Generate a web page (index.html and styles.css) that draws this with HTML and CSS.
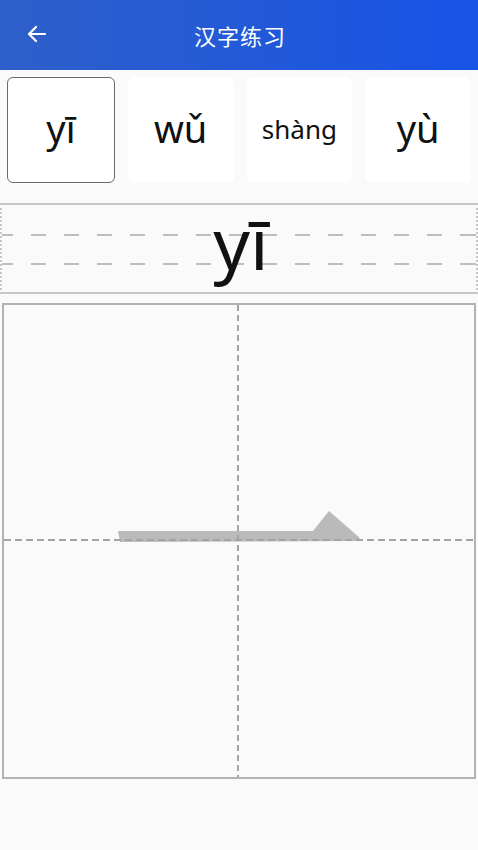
FILE: index.html
```html
<!DOCTYPE html>
<html lang="zh">
<head>
<meta charset="utf-8">
<title>汉字练习</title>
<link rel="stylesheet" href="styles.css">
</head>
<body>
<header class="topbar">
  <button class="back" aria-label="返回">
    <svg width="24" height="24" viewBox="0 0 24 24" fill="none" stroke="#fff" stroke-width="2.2" stroke-linecap="round" stroke-linejoin="round"><path d="M20 12H4.5"/><path d="M11 5l-7 7 7 7"/></svg>
  </button>
  <h1 class="title">汉字练习</h1>
</header>

<section class="cards">
  <div class="card active"><span class="py">yī</span></div>
  <div class="card"><span class="py">wǔ</span></div>
  <div class="card"><span class="py small">shàng</span></div>
  <div class="card"><span class="py">yù</span></div>
</section>

<section class="lines">
  <div class="band b1"></div>
  <div class="dash"></div>
  <div class="band b2"></div>
  <div class="dash"></div>
  <div class="band b3"></div>
  <div class="big">yī</div>
</section>

<section class="grid">
  <svg class="grid-svg" viewBox="0 0 470 472" preserveAspectRatio="none">
    <polygon points="114,226 309,226 325,206 356,233 353,236 116,237" fill="#bababa"/>
    <line x1="234" y1="0" x2="234" y2="472" stroke="#a3a3a3" stroke-width="2" stroke-dasharray="6 4"/>
    <line x1="0" y1="235" x2="470" y2="235" stroke="#a3a3a3" stroke-width="2" stroke-dasharray="7 4"/>
  </svg>
</section>
</body>
</html>
```

FILE: styles.css
```css
* { box-sizing: border-box; }
html, body { margin: 0; padding: 0; }
body {
  width: 478px;
  height: 850px;
  background: #fafafa;
  font-family: "Noto Sans", Roboto, sans-serif;
  overflow: hidden;
}
.topbar {
  height: 70px;
  background: linear-gradient(to right, #2f5fc9, #1754e6);
  display: flex;
  align-items: center;
  justify-content: center;
  position: relative;
}
.back {
  position: absolute;
  left: 25px;
  top: 22px;
  width: 24px;
  height: 24px;
  padding: 0;
  border: 0;
  background: none;
  display: flex;
}
.title {
  margin: 0;
  color: #fff;
  font-family: "Noto Sans CJK SC", sans-serif;
  font-weight: 400;
  font-size: 22px;
  letter-spacing: 1px;
  line-height: 1;
  padding-left: 2px;
}
.cards {
  display: flex;
  gap: 13px;
  padding: 7px 7px 0 7px;
}
.card {
  flex: 1;
  height: 106px;
  background: #fff;
  border-radius: 6px;
  display: flex;
  align-items: center;
  justify-content: center;
}
.card.active {
  border: 1.5px solid #6a6a6a;
}
.py {
  font-size: 38px;
  color: #111;
  line-height: 1;
  padding-bottom: 4px;
}
.py.small {
  font-size: 26px;
  padding-bottom: 2px;
}
.lines {
  position: relative;
  margin-top: 20px;
  height: 91px;
  border-top: 2px solid #c6c6c6;
  border-bottom: 2px solid #c6c6c6;
  border-left: 2px dotted #c6c6c6;
  border-right: 2px dotted #c6c6c6;
  display: flex;
  flex-direction: column;
}
.band.b1 { height: 29px; }
.band.b2 { height: 27px; }
.band.b3 { flex: 1; }
.dash {
  height: 2px;
  background: repeating-linear-gradient(to right, #bdbdbd 0 15px, transparent 15px 33px);
  background-position: -4px 0;
}
.big {
  position: absolute;
  left: 0;
  right: 0;
  top: 0;
  text-align: center;
  font-size: 72px;
  line-height: 72px;
  color: #111;
  padding-left: 4px;
  margin-top: 1px;
}
.grid {
  margin: 9px 2px 0 2px;
  height: 476px;
  border: 2px solid #b3b3b3;
  background: #fafafa;
}
.grid-svg {
  display: block;
  width: 100%;
  height: 100%;
}
```
